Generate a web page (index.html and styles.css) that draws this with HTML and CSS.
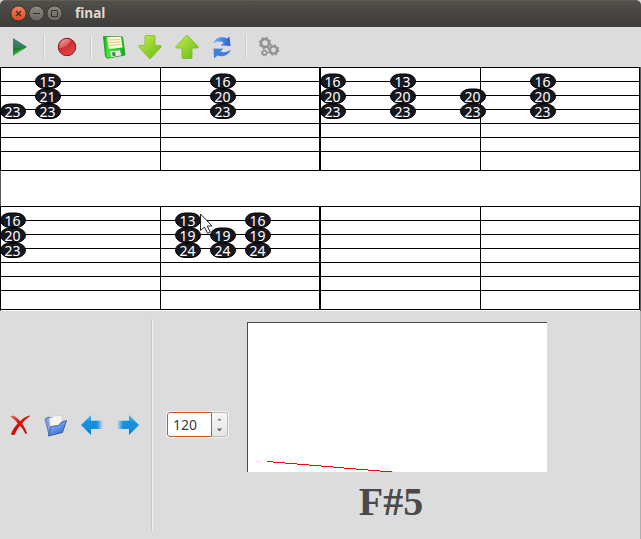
FILE: index.html
```
<!DOCTYPE html>
<html lang="en">
<head>
<meta charset="utf-8">
<title>final</title>
<link rel="stylesheet" href="styles.css">
</head>
<body>
<div class="window">
  <header class="titlebar">
    <svg class="controls" width="66" height="27" viewBox="0 0 66 27">
      <defs>
        <linearGradient id="close" x2="0" y2="1"><stop stop-color="#f88060"/><stop offset="1" stop-color="#df4b1d"/></linearGradient>
        <linearGradient id="grey" x2="0" y2="1"><stop stop-color="#8d8a82"/><stop offset="1" stop-color="#66645e"/></linearGradient>
      </defs>
      <g stroke="#33322e">
        <circle cx="18.500" cy="13.500" r="7.600" fill="url(#close)"/>
        <circle cx="36.500" cy="13.500" r="7.600" fill="url(#grey)"/>
        <circle cx="54.500" cy="13.500" r="7.600" fill="url(#grey)"/>
        <path d="M16 11l5 5M21 11l-5 5" stroke-width="1.300"/>
        <path d="M33 13.500h7M51.500 10.500h6v6h-6z" fill="none"/>
      </g>
    </svg>
    <h1 class="title">final</h1>
  </header>

  <nav class="toolbar">
    <svg class="tool" width="24" height="24" viewBox="0 0 24 24">
      <defs><linearGradient id="play" x2="0" y2="1"><stop stop-color="#427b78"/><stop offset=".5" stop-color="#347f5c"/><stop offset=".6" stop-color="#138028"/><stop offset="1" stop-color="#29a73a"/></linearGradient></defs>
      <path d="M5 3l14 9-14 9z" fill="url(#play)"/><path d="M5 20l6-5 6-2-12 8z" fill="#7be078" opacity=".5"/>
    </svg>
    <span class="rule"></span>
    <svg class="tool" width="24" height="24" viewBox="0 0 24 24">
      <defs><linearGradient id="rec" x2=".6" y2="1"><stop stop-color="#f09a9a"/><stop offset=".5" stop-color="#d22c30"/><stop offset="1" stop-color="#e34548"/></linearGradient></defs>
      <circle cx="12" cy="12" r="8.700" fill="url(#rec)" stroke="#8d1418"/>
      <path d="M4.500 13c4 0 9-2 11-8-6-3-11 2-11 8z" fill="#fff" opacity=".22"/>
    </svg>
    <span class="rule"></span>
    <svg class="tool" width="24" height="24" viewBox="0 0 24 24">
      <defs><linearGradient id="disk" x2="1"><stop stop-color="#0c9b16"/><stop offset=".2" stop-color="#43e83c"/><stop offset="1" stop-color="#1cae22"/></linearGradient></defs>
      <path d="M1.500 1.500l19 .5 2.500 18-17.500 3.300-2-1.800z" fill="url(#disk)" stroke="#16951b" stroke-width=".8"/>
      <path d="M5 2h14l1.500 10.500L7 14z" fill="#fcf8cd"/>
      <path d="M7 5l11-.5M7.300 7.700l11-.7M7.700 10.500l11-1" stroke="#d4c998" fill="none"/>
      <path d="M8 16.500l10-1.300 1.300 5-10.300 2z" fill="#e3e6e5"/><path d="M10 17.500l3-.4.700 3.600-3 .5z" fill="#477c4c"/>
    </svg>
    <svg class="tool" width="26" height="26" viewBox="0 0 26 26">
      <defs><linearGradient id="lime" x2="1" y2="1"><stop stop-color="#c5ef52"/><stop offset="1" stop-color="#65b80d"/></linearGradient></defs>
      <path d="M9 1.500h8q1 0 1 1v9h5.500q1.500.3.500 1.500L14 24q-1 1-2 0L2 13q-1-1.200.5-1.500L8 11.300V2.500q0-1 1-1z" fill="url(#lime)" stroke="#79bd22" stroke-width=".8"/>
    </svg>
    <svg class="tool" width="26" height="26" viewBox="0 0 26 26">
      <path d="M9 24.500h8q1 0 1-1V14h5.500q1.500-.3.500-1.500L14 2q-1-1-2 0L2 12.500q-1 1.200.5 1.500H8v9.500q0 1 1 1z" fill="url(#lime)" stroke="#79bd22" stroke-width=".8"/>
    </svg>
    <svg class="tool" width="24" height="24" viewBox="0 0 24 24">
      <defs><linearGradient id="sync" x2="1"><stop stop-color="#78b4ef"/><stop offset="1" stop-color="#2460d3"/></linearGradient></defs>
      <path d="M3 8.500C5.500 2.500 11.500 1 17 3.500L19.500 1.500l1 9.500-10-.5 3.300-2.700C11 6 7 6 3 8.500z" fill="url(#sync)"/>
      <path d="M21 14.500c-2.500 6-8 8-13.500 6L4 23.500l-.5-10 10 .3-3.200 2.700c3.500 1.500 7 .5 10.700-2z" fill="#3f80df"/>
    </svg>
    <span class="rule"></span>
    <svg class="tool" width="24" height="24" viewBox="0 0 24 24">
      <g fill="none" stroke="#929292">
        <circle cx="8" cy="8" r="4" stroke-width="2.500"/><circle cx="8" cy="8" r="5.500" stroke-width="1.400" stroke-dasharray="2.160"/>
        <circle cx="16.500" cy="15" r="3.600" stroke-width="2.400"/><circle cx="16.500" cy="15" r="5.100" stroke-width="1.400" stroke-dasharray="2"/>
        <circle cx="7.500" cy="17.800" r="2.100" stroke-width="1.600"/><circle cx="7.500" cy="17.800" r="3.100" stroke-width="1" stroke-dasharray="1.220"/>
      </g>
    </svg>
  </nav>

  <svg class="score" id="score" width="641" height="244" viewBox="0 67 641 244"></svg>

  <main class="panel">
    <div class="actions">
      <svg width="24" height="24" viewBox="0 0 24 24">
        <defs><linearGradient id="cross" x2="1" y2="1"><stop stop-color="#f08070"/><stop offset=".35" stop-color="#d61409"/><stop offset="1" stop-color="#bd0500"/></linearGradient></defs>
        <path d="M2 3.500l3.500-1c3 1.500 5 4 6.500 5.700C15 5.500 18 3 22 2.500v.8c-3 1.500-6 4.500-8 7.200 2 2.700 4 6.500 5 10l-1.500.5c-2-4-3.500-6.200-5.500-8.200-2.500 3-4 5.600-5 8.400-1.300 1.200-3.500.8-4-.3 1.600-4 4-7.500 6.800-10.700C7.500 7.500 5 5.300 2 3.500z" fill="url(#cross)"/>
      </svg>
      <svg width="24" height="24" viewBox="1 0 24 24">
        <defs><linearGradient id="fold" x2=".6" y2="1"><stop stop-color="#a8c8ff"/><stop offset="1" stop-color="#3568cf"/></linearGradient></defs>
        <path d="M2 6l3-2 3 1 11 2 1 8L6 22z" fill="#7d9fde" stroke="#3f60a0" stroke-width=".7"/>
        <path d="M6 6l5-3 8-1 1 11-12 5z" fill="#f4f4f2" stroke="#bcbfc4" stroke-width=".6"/>
        <path d="M5.500 23L8 13.500l7.500-1L18 9.500l5.500-2-4 12z" fill="url(#fold)" stroke="#244b9f" stroke-width=".8"/>
      </svg>
      <svg width="24" height="24" viewBox="0 0 24 24">
        <defs>
          <linearGradient id="sky" x2="0" y2="1"><stop stop-color="#38b5f4"/><stop offset="1" stop-color="#0872cc"/></linearGradient>
          <linearGradient id="skyL"><stop offset=".72" stop-color="#168fe1"/><stop offset="1" stop-color="#168fe1" stop-opacity="0"/></linearGradient>
        </defs>
        <path d="M1 12l10-10V22z" fill="url(#sky)"/><path d="M2 12l5-4.200h16v8.200H7z" fill="url(#skyL)"/>
      </svg>
      <svg width="24" height="24" viewBox="0 0 24 24"><g transform="matrix(-1 0 0 1 24 0)">
        <path d="M1 12l10-10V22z" fill="url(#sky)"/><path d="M2 12l5-4.200h16v8.200H7z" fill="url(#skyL)"/>
      </g></svg>
    </div>
    <span class="divider"></span>
    <div class="spin">
      <span class="value">120</span>
      <svg class="steps" width="17" height="24" viewBox="0 0 17 24"><path d="M6 7.500L8.500 5 11 7.500z" fill="#777"/><path d="M5.500 16.500h6l-3 3.500z" fill="#666"/></svg>
    </div>
    <section class="detector">
      <div class="graph">
        <svg id="trace" class="trace" width="299" height="149" viewBox="248 323 299 149"></svg>
      </div>
      <p class="pitch">F#5</p>
    </section>
  </main>
</div>
<script src="score.js"></script>
</body>
</html>
```

FILE: styles.css
```
* { box-sizing: border-box; }
body { margin: 0; background: #dcdcdc; overflow: hidden; }
svg { display: block; flex: none; }
.window { width: 641px; height: 539px; display: flex; flex-direction: column; background: #dcdcdc; border-radius: 5px 5px 0 0; }
.titlebar { height: 27px; flex: none; display: flex; align-items: center; background: linear-gradient(#504f4a, #3d3c38); border-top: 1px solid #5e5d58; border-radius: 5px 5px 0 0; }
.controls { margin-top: -1px; }
.title { margin: -2px 0 0 9px; font: bold 13.5px/20px "Open Sans", "Noto Sans", sans-serif; color: #dfdbd2; }
.toolbar { height: 40px; flex: none; display: flex; align-items: center; padding-left: 8px; }
.rule { width: 2px; height: 24px; background: linear-gradient(90deg, #cbcbcb 50%, #f1f1f1 50%); margin: 0 10px 0 11px; }
.tool + .tool { margin-left: 11px; }
.tool + .tool + .tool + .tool { margin-left: 10px; }
.score { background: #fff; }
.line { fill: #000; shape-rendering: crispEdges; }
.edge { fill: #5c5c5c; }
.note ellipse, .note rect { fill: #171720; stroke: #000; }
.note text { font: 14px "Noto Sans", sans-serif; fill: #fff; text-anchor: middle; }
.panel { flex: 1; display: flex; align-items: center; border-right: 1px solid #adadad; }
.actions { display: flex; gap: 12px; width: 151px; padding-left: 8px; }
.divider { width: 2px; height: 212px; background: linear-gradient(90deg, #c9c9c9 50%, #f2f2f2 50%); }
.spin { width: 63px; height: 27px; margin: -2px 0 0 13px; display: flex; border: 1px solid #f0f0f0; border-radius: 3px; background: #fff; }
.value { width: 45px; height: 25px; border: 1px solid #d2512a; border-radius: 3px 0 0 3px; padding-left: 5px; font: 14px/23px "Noto Sans", sans-serif; color: #3c3c3c; }
.steps { width: 16px; height: 25px; border: 1px solid #bbb; border-left: 0; border-radius: 0 3px 3px 0; background: linear-gradient(#f7f7f7, #e5e5e5); }
.detector { width: 300px; height: 206px; margin-left: 18px; }
.graph { height: 150px; border: solid #4a4a4a; border-width: 1px 0 0 1px; background: #fff; }
.trace { fill: #f00; shape-rendering: crispEdges; }
.pitch { margin: 7px 0 0; padding-right: 12px; text-align: center; font: bold 40px/46px "Liberation Serif", serif; color: #4a4a4a; }
```

FILE: score.js
```
const rows = [
  { top: 67, notes: [[13, [, , 23]], [48, [15, 21, 23]], [223, [16, 20, 23]], [333, [16, 20, 23]], [403, [13, 20, 23]], [473, [, 20, 23]], [543, [16, 20, 23]]] },
  { top: 206, notes: [[13, [16, 20, 23]], [188, [13, 19, 24]], [223, [, 19, 24]], [258, [16, 19, 24]]] }
];
const rect = (x, y, w, h, c = "line") => `<rect class="${c}" x="${x}" y="${y}" width="${w}" height="${h}"/>`;
let out = rect(0, 67, 1, 244, "edge") + rect(640, 67, 1, 244, "edge");
for (const row of rows) {
  for (const dy of [0, 14, 28, 42, 56, 70, 84, 103]) out += rect(0, row.top + dy, 640, 1);
  for (const [x, w] of [[0, 1], [160, 1], [319, 2], [480, 1], [639, 1]]) out += rect(x, row.top, w, 104);
  for (const [x, frets] of row.notes) frets.forEach((n, i) => {
    const y = row.top + 14 + i * 15;
    out += `<g class="note"><rect x="${x - 12.5}" y="${y - 7}" width="25" height="14.500" rx="9.500" ry="7.250"/><text x="${x - 0.5}" y="${y + 6}">${n}</text></g>`;
  });
}
out += `<path d="M200.500 214v16.500l4-3.500 3 6.300 2.700-1.300-3-6h4.800z" fill="#fff" stroke="#222"/>`;
document.getElementById("score").innerHTML = out;

const steps = [267, 273, 285, 297, 309, 321, 333, 344, 356, 368, 380, 392];
document.getElementById("trace").innerHTML = steps.slice(1).map((x, i) =>
  `<rect x="${steps[i]}" y="${461 + i}" width="${x - steps[i]}" height="1"/>`).join("");
```
